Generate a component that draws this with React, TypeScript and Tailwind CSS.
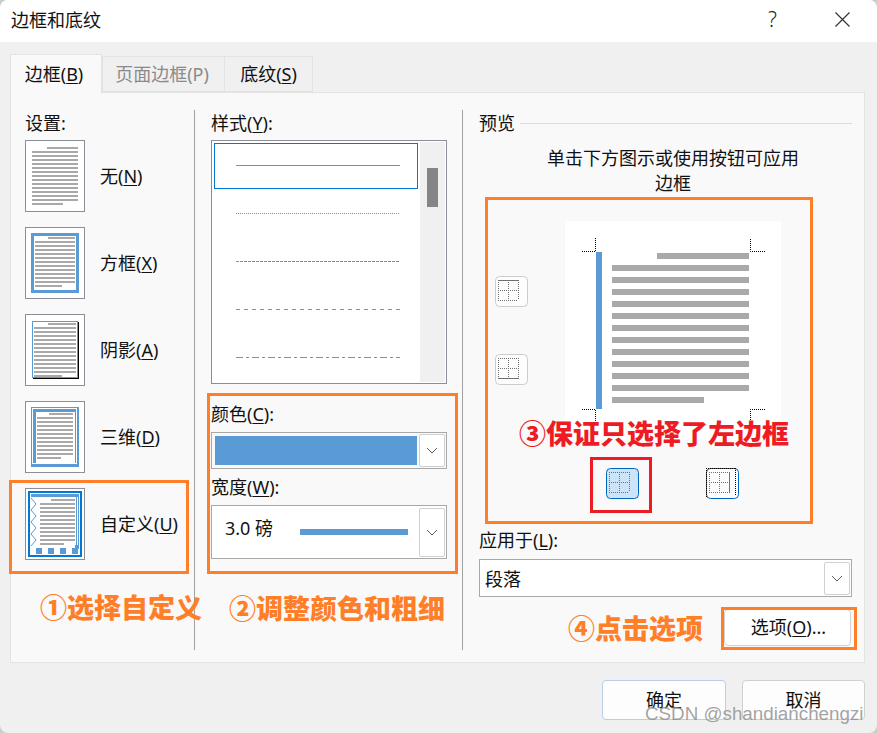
import React from "react";

const BLUE = "#5b9bd5";
const GRAY = "#a9a9a9";

function Key({ k }: { k: string }) {
  return <span className="underline underline-offset-2 decoration-1">{k}</span>;
}

function Lines({ x1, x2, first, y, n, last }: { x1: number; x2: number; first: number; y: number; n: number; last: number }) {
  const out = [];
  for (let i = 0; i < n; i++) {
    const sx = i === 0 ? first : x1;
    const ex = i === n - 1 ? last : x2;
    out.push(<rect key={i} x={sx} y={y + i * 4} width={ex - sx} height={2} fill={GRAY} />);
  }
  return <>{out}</>;
}

function Thumb({ children }: { children: React.ReactNode }) {
  return (
    <svg width={60} height={72} viewBox="0 0 60 72" className="block shrink-0">
      <rect x={0.5} y={0.5} width={59} height={71} fill="#fff" stroke="#8b8e96" />
      {children}
    </svg>
  );
}

function SettingRow({ label, k, children }: { label: string; k: string; children: React.ReactNode }) {
  return (
    <div className="flex items-center h-[72px]">
      <Thumb>{children}</Thumb>
      <span className="ml-[15px] text-[18px]">
        {label}(<Key k={k} />)
      </span>
    </div>
  );
}

function Chevron() {
  return (
    <svg width={12} height={7} viewBox="0 0 12 7" className="block">
      <path d="M1 1 L6 6 L11 1" fill="none" stroke="#606060" strokeWidth={1} />
    </svg>
  );
}

function DropBtn({ h }: { h: string }) {
  return (
    <div className={`w-[26px] ${h} bg-white border border-[#d0d0d0] rounded-[2px] flex items-center justify-center shrink-0`}>
      <Chevron />
    </div>
  );
}

function StyleLine({ dash }: { dash?: string }) {
  return (
    <svg width={164} height={1} viewBox="0 0 164 1" className="block ml-[21px] overflow-visible">
      <line x1={0} y1={0.5} x2={164} y2={0.5} stroke="#5f97c9" strokeWidth={1} strokeDasharray={dash} />
    </svg>
  );
}

function CellIcon({ edge, selected, ghost }: { edge: "top" | "bottom" | "left" | "right"; selected?: boolean; ghost?: boolean }) {
  const s = "#707070";
  const dots = "1 1";
  const x1 = 3, x2 = 23, y1 = 4, y2 = 24;
  return (
    <svg width={33} height={31} viewBox="0 0 33 31" className="block">
      <rect
        x={0.5}
        y={0.5}
        width={32}
        height={30}
        rx={4}
        fill={selected ? "#cce4f7" : "#fdfdfd"}
        stroke={selected || ghost ? "#0067c0" : "#cccccc"}
        strokeWidth={1}
      />
      <g fill="none" stroke={s} strokeWidth={1}>
        <line x1={x1} y1={y1 + 0.5} x2={x2} y2={y1 + 0.5} strokeDasharray={dots} />
        <line x1={x1} y1={y2 + 0.5} x2={x2} y2={y2 + 0.5} strokeDasharray={dots} />
        <line x1={x1 + 0.5} y1={y1} x2={x1 + 0.5} y2={y2} strokeDasharray={dots} />
        <line x1={x2 + 0.5} y1={y1} x2={x2 + 0.5} y2={y2} strokeDasharray={dots} />
        <line x1={x1} y1={14.5} x2={x2} y2={14.5} strokeDasharray={dots} />
        <line x1={13.5} y1={y1} x2={13.5} y2={y2} strokeDasharray={dots} />
      </g>
      {edge === "top" && <rect x={3} y={4} width={21} height={1} fill={s} />}
      {edge === "bottom" && <rect x={3} y={24} width={21} height={1} fill={s} />}
      {edge === "right" && <rect x={23} y={4} width={1} height={21} fill={s} />}
      {ghost && (
        <g fill="none" stroke="#000" strokeWidth={1} strokeDasharray="1 1">
          <line x1={0} y1={0.5} x2={29} y2={0.5} />
          <line x1={0.5} y1={0} x2={0.5} y2={29} />
          <line x1={29.5} y1={0} x2={29.5} y2={28} />
        </g>
      )}
    </svg>
  );
}

function Preview() {
  const lines = [];
  for (let i = 0; i < 13; i++) {
    const x = i === 0 ? 92 : 47;
    const ex = i === 12 ? 139 : 184;
    lines.push(<rect key={i} x={x} y={32 + i * 12} width={ex - x} height={6} fill={GRAY} />);
  }
  const d = { stroke: "#000", strokeWidth: 1, strokeDasharray: "1 1", fill: "none" };
  return (
    <svg width={216} height={219} viewBox="0 0 216 219" className="block bg-white shrink-0">
      <rect x={31} y={31} width={6} height={157} fill={BLUE} />
      {lines}
      <path d="M17 30.5 H30.5 V17" {...d} />
      <path d="M200 30.5 H185.5 V17" {...d} />
      <path d="M17 188.5 H30.5 V203" {...d} />
      <path d="M200 188.5 H185.5 V203" {...d} />
    </svg>
  );
}

const zig = "M6 10 L11 16 L6 22 L11 28 L6 34 L11 40 L6 46 L11 52 L6 58";

export default function App() {
  return (
    <div className="w-[877px] h-[733px] bg-[#cccccc]">
      <div
        className="relative w-[877px] h-[733px] overflow-hidden bg-[#f0f0f0] text-[#111] flex flex-col rounded-[8px]"
        style={{ fontFamily: '"Noto Sans","Noto Sans CJK SC",sans-serif' }}
      >
        {/* title bar */}
        <div className="h-[42px] bg-white flex items-center shrink-0 pb-[3px]">
          <span className="ml-[11px] text-[18px] leading-none">边框和底纹</span>
          <span className="ml-auto text-[21px] leading-none font-light text-[#222] mr-[58px]">?</span>
          <svg width={15} height={15} viewBox="0 0 15 15" className="block mr-[27px]">
            <path d="M0.5 0.5 L14.5 14.5 M14.5 0.5 L0.5 14.5" stroke="#333" strokeWidth={1.2} fill="none" />
          </svg>
        </div>

        {/* tabs */}
        <div className="h-[51px] pl-[10px] flex items-end shrink-0 relative z-10">
          <div className="w-[92px] h-[39px] pr-[4px] bg-[#f9f9f9] border border-b-0 border-[#e3e3e3] flex items-center justify-center text-[18px]">
            <span>
              边框(<Key k="B" />)
            </span>
          </div>
          <div className="w-[123px] h-[36px] pr-[3px] mb-[1px] bg-[#f0f0f0] border border-[#e3e3e3] flex items-center justify-center text-[18px] text-[#8a8a8a]">
            <span>
              页面边框(<span>P</span>)
            </span>
          </div>
          <div className="w-[88px] h-[36px] mb-[1px] bg-[#f0f0f0] border border-l-0 border-[#e3e3e3] flex items-center justify-center text-[18px]">
            <span>
              底纹(<Key k="S" />)
            </span>
          </div>
        </div>

        {/* panel */}
        <div className="mx-[10px] -mt-px w-[855px] h-[571px] bg-[#f9f9f9] border border-[#e3e3e3] flex pt-[17px] pb-[12px] shrink-0">
          {/* left */}
          <div className="w-[184px] pl-[14px] border-r border-[#a0a0a0] shrink-0">
            <div className="h-[30px] text-[18px] leading-[26px]">设置:</div>
            <div className="flex flex-col gap-[15px]">
              <SettingRow label="无" k="N">
                <Lines x1={7} x2={53} first={22} y={7} n={15} last={38} />
              </SettingRow>
              <SettingRow label="方框" k="X">
                <rect x={7.5} y={7.5} width={45} height={57} fill="none" stroke={BLUE} strokeWidth={3} />
                <Lines x1={10} x2={50} first={23} y={10} n={13} last={37} />
              </SettingRow>
              <SettingRow label="阴影" k="A">
                <rect x={8} y={8} width={46} height={57} fill="#000" />
                <rect x={7.5} y={7.5} width={45} height={56} fill="#fff" stroke={BLUE} />
                <Lines x1={9} x2={51} first={23} y={9} n={14} last={37} />
              </SettingRow>
              <SettingRow label="三维" k="D">
                <rect x={6} y={6} width={48} height={60} fill={BLUE} />
                <rect x={7.5} y={7.5} width={44} height={55} fill="none" stroke="#fff" />
                <rect x={11} y={11} width={39} height={51} fill="#fff" />
                <Lines x1={12} x2={48} first={24} y={12} n={12} last={36} />
              </SettingRow>
              <SettingRow label="自定义" k="U">
                <rect x={4} y={4} width={52} height={64} fill="none" stroke="#0078d4" strokeWidth={2} />
                <rect x={6} y={6} width={48} height={3} fill={BLUE} />
                <rect x={51} y={9} width={1} height={49} fill={BLUE} />
                <rect x={53} y={9} width={1} height={52} fill={BLUE} />
                <path d={zig} fill="none" stroke={BLUE} strokeWidth={1} />
                <rect x={11} y={60} width={6} height={6} fill={BLUE} />
                <rect x={23} y={60} width={6} height={6} fill={BLUE} />
                <rect x={35} y={60} width={6} height={6} fill={BLUE} />
                <rect x={47} y={60} width={6} height={6} fill={BLUE} />
                <rect x={50} y={57} width={4} height={4} fill={BLUE} />
                <Lines x1={15} x2={50} first={26} y={11} n={12} last={39} />
              </SettingRow>
            </div>
          </div>

          {/* middle */}
          <div className="w-[268px] pl-[16px] border-r border-[#a0a0a0] shrink-0">
            <div className="h-[30px] text-[18px] leading-[26px]">
              样式(<Key k="Y" />):
            </div>
            <div className="w-[236px] h-[244px] bg-white border border-[#8b8e96] flex p-[1px]">
              <div className="flex-1 flex flex-col">
                <div className="h-[46px] ml-[1px] mt-[1px] mr-[2px] border border-[#0078d4] flex items-center pb-[1px]">
                  <StyleLine />
                </div>
                <div className="h-[48px] flex items-center pl-[2px]">
                  <StyleLine dash="1 1" />
                </div>
                <div className="h-[48px] flex items-center pl-[2px]">
                  <StyleLine dash="3 1" />
                </div>
                <div className="h-[48px] flex items-center pl-[2px]">
                  <StyleLine dash="4 4" />
                </div>
                <div className="h-[48px] flex items-center pl-[2px]">
                  <StyleLine dash="7 3 3 3" />
                </div>
              </div>
              <div className="w-[25px] bg-[#f0f0f0] flex justify-center pt-[26px]">
                <div className="w-[11px] h-[39px] bg-[#858585]" />
              </div>
            </div>
            <div className="h-[48px] pt-[12px] flex items-center text-[18px]">
              颜色(<Key k="C" />):
            </div>
            <div className="w-[236px] h-[37px] bg-[#f9f9f9] border border-[#a8a8a8] flex items-center pl-[3px] pr-[1px] gap-[2px]">
              <div className="w-[202px] h-[29px] bg-[#5b9bd5]" />
              <DropBtn h="h-[33px]" />
            </div>
            <div className="h-[36px] flex items-center text-[18px]">
              宽度(<Key k="W" />):
            </div>
            <div className="w-[236px] h-[54px] bg-white border border-[#a8a8a8] flex items-center pr-[1px]">
              <span className="ml-[13px] w-[75px] text-[18px] pb-[8px]">3.0 磅</span>
              <div className="w-[108px] h-[6px] bg-[#5b9bd5]" />
              <div className="ml-auto">
                <DropBtn h="h-[49px]" />
              </div>
            </div>
          </div>

          {/* right */}
          <div className="flex-1 pl-[16px]">
            <div className="flex items-center h-[26px] w-[373px]">
              <span className="text-[18px]">预览</span>
              <div className="ml-[5px] flex-1 h-px bg-[#dcdcdc]" />
            </div>
            <div className="ml-[68px] w-[252px] text-center text-[18px] leading-[25px] mt-[10px]">
              <div>单击下方图示或使用按钮可应用</div>
              <div>边框</div>
            </div>
            <div className="flex mt-[25px] pl-[16px]">
              <div className="w-[70px] flex flex-col pt-[55px] gap-[47px]">
                <CellIcon edge="top" />
                <CellIcon edge="bottom" />
              </div>
              <Preview />
            </div>
            <div className="flex pl-[127px] gap-[67px] mt-[28px]">
              <CellIcon edge="left" selected />
              <CellIcon edge="right" ghost />
            </div>
            <div className="h-[60px] pt-[23px] flex items-center text-[18px]">
              应用于(<Key k="L" />):
            </div>
            <div className="w-[373px] h-[38px] bg-white border border-[#a8a8a8] flex items-center pr-[1px]">
              <span className="ml-[5px] text-[18px] pt-[2px]">段落</span>
              <div className="ml-auto">
                <DropBtn h="h-[33px]" />
              </div>
            </div>
            <div className="flex justify-end w-[372px] mt-[12px]">
              <div className="w-[127px] h-[37px] bg-white border border-[#d0d0d0] rounded-[4px] flex items-center justify-center text-[18px] pl-[2px]">
                <span>
                  选项(<Key k="O" />)...
                </span>
              </div>
            </div>
          </div>
        </div>

        {/* dialog buttons */}
        <div className="flex justify-end gap-[16px] pr-[12px] pt-[17px]">
          <div className="w-[124px] h-[40px] bg-[#fdfdfd] border border-[#b8cfe6] rounded-[4px] flex items-center justify-center text-[18px]">确定</div>
          <div className="w-[123px] h-[40px] bg-[#fdfdfd] border border-[#d0d0d0] rounded-[4px] flex items-center justify-center text-[18px]">取消</div>
        </div>

        {/* annotations */}
        <div className="absolute left-[9px] top-[480px] w-[180px] h-[94px] border-[3px] border-[#ff7e28]" />
        <div className="absolute left-[207px] top-[393px] w-[251px] h-[181px] border-[3px] border-[#ff7e28]" />
        <div className="absolute left-[485px] top-[197px] w-[328px] h-[327px] border-[3px] border-[#ff7e28]" />
        <div className="absolute left-[590px] top-[457px] w-[62px] h-[56px] border-[3px] border-[#ed1c24]" />
        <div className="absolute left-[721px] top-[607px] w-[136px] h-[43px] border-[3px] border-[#ff7e28]" />
        <div className="absolute left-[40px] top-[589px] text-[27px] leading-[36px] font-black text-[#ff7e28] whitespace-nowrap" style={{ fontFamily: '"Noto Sans CJK SC",sans-serif' }}>①选择自定义</div>
        <div className="absolute left-[229px] top-[590px] text-[27px] leading-[36px] font-black text-[#ff7e28] whitespace-nowrap" style={{ fontFamily: '"Noto Sans CJK SC",sans-serif' }}>②调整颜色和粗细</div>
        <div className="absolute left-[519px] top-[415px] text-[27px] leading-[36px] font-black text-[#ed1c24] whitespace-nowrap" style={{ fontFamily: '"Noto Sans CJK SC",sans-serif', textShadow: "0 0 2px #fff" }}>③保证只选择了左边框</div>
        <div className="absolute left-[568px] top-[610px] text-[27px] leading-[36px] font-black text-[#ff7e28] whitespace-nowrap" style={{ fontFamily: '"Noto Sans CJK SC",sans-serif' }}>④点击选项</div>
        <div className="absolute left-[645px] top-[703px] text-[18.8px] leading-[22px] text-[#8c8c8c]/80 whitespace-nowrap" style={{ fontFamily: '"Liberation Sans",sans-serif' }}>CSDN @shandianchengzi</div>
      </div>
    </div>
  );
}
